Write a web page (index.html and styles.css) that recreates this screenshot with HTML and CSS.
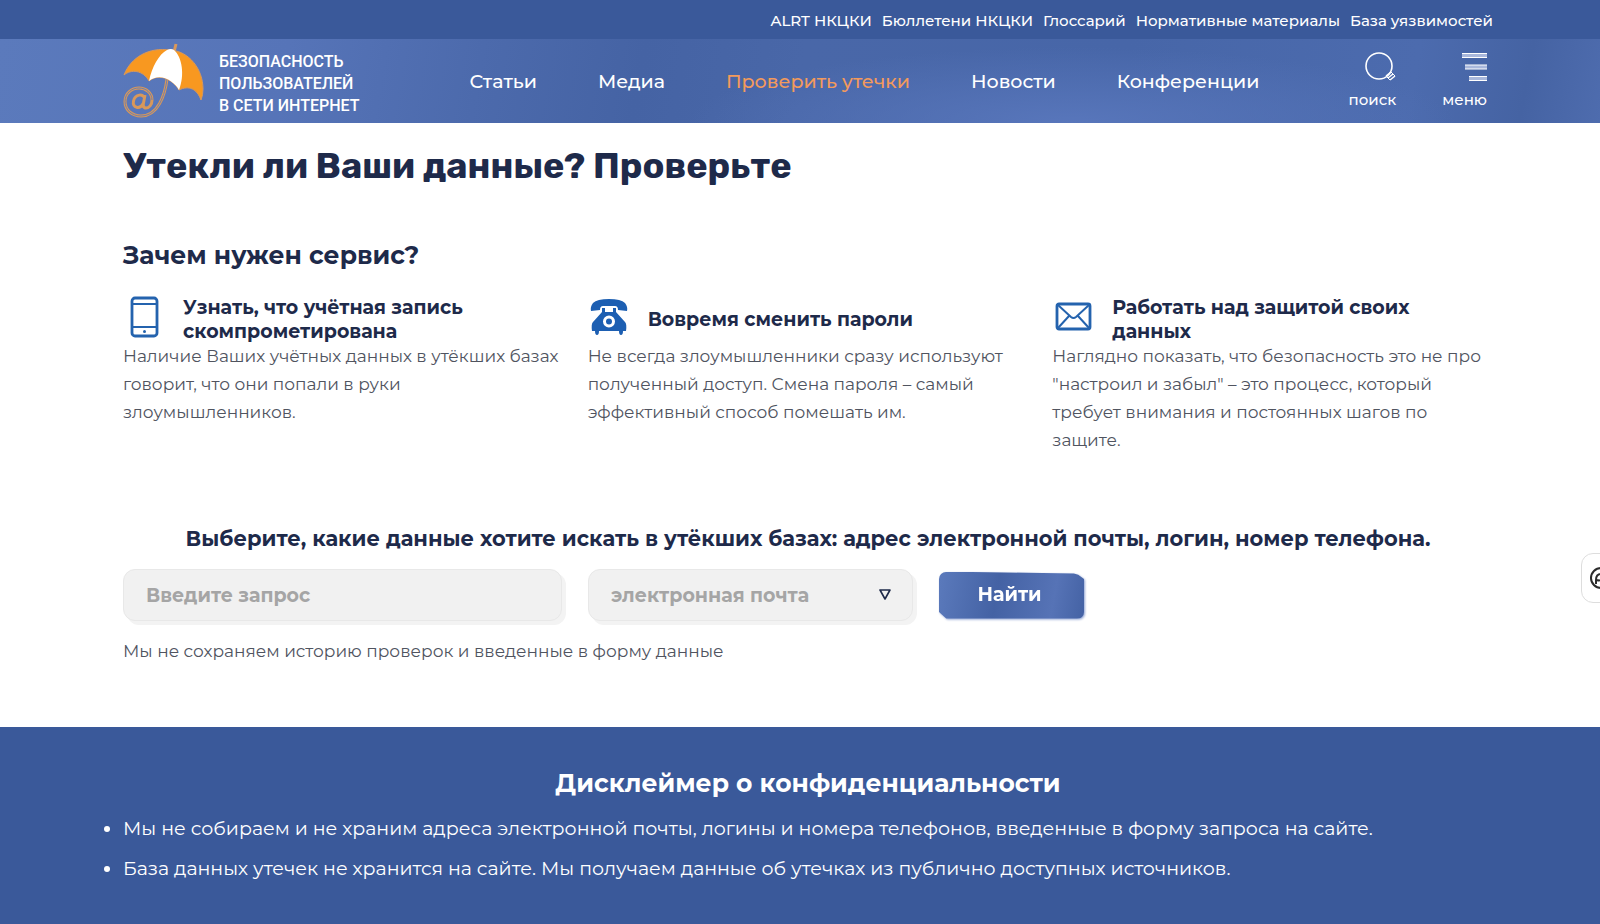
FILE: index.html
```html
<!DOCTYPE html>
<html lang="ru">
<head>
<meta charset="utf-8">
<meta name="viewport" content="width=device-width, initial-scale=1">
<title>Утекли ли Ваши данные? Проверьте</title>
<link rel="stylesheet" href="styles.css">
</head>
<body>
<nav class="topbar wrap" aria-label="Ссылки">
  <a href="#">ALRT НКЦКИ</a>
  <a href="#">Бюллетени НКЦКИ</a>
  <a href="#">Глоссарий</a>
  <a href="#">Нормативные материалы</a>
  <a href="#">База уязвимостей</a>
</nav>
<header class="header wrap">
  <a class="logo" href="#">
    <svg class="logo-mark" viewBox="0 0 82 76" aria-hidden="true">
      <path d="M51 9L53 1" fill="none" stroke="#d9985a" stroke-width="3"/>
      <path d="M44 36C42 52 35 73 18 73C9 73 2 67 2 58.500C2 50 9 45 16 45C23 45 29 50 29 57C29 62 26 65 23 65C20 65 20 62 20.500 60L22 52M21.500 56C21 50 12 51 10.500 58C9 65 17 67 20.500 60" fill="none" stroke="#d9985a" stroke-width="3" stroke-linejoin="round"/>
      <path d="M44 36C42 52 35 73 18 73C9 73 2 67 2 58.500C2 50 9 45 16 45C23 45 29 50 29 57" fill="none" stroke="#6d7fae" stroke-width="1"/>
      <path d="M1 32C8 14 26 4 47 7C66 8 80 26 80 46Q80 52 78 57C74 46 66 42 56 47C51 38 37 29 26 38C20 27 8 26 1 32Z" fill="#f89820" stroke="#d9985a" stroke-width="1"/>
      <path d="M26 38C29 24 36 11 44 7Q48 5 51 7C59 14 62 32 56 47C51 38 37 29 26 38Z" fill="#fff"/>
    </svg>
    <span class="logo-text">БЕЗОПАСНОСТЬ<br>ПОЛЬЗОВАТЕЛЕЙ<br>В СЕТИ ИНТЕРНЕТ</span>
  </a>
  <nav class="menu" aria-label="Основное меню">
    <a href="#">Статьи</a>
    <a href="#">Медиа</a>
    <a class="active" href="#">Проверить утечки</a>
    <a href="#">Новости</a>
    <a href="#">Конференции</a>
  </nav>
  <div class="tools">
    <button class="tool" type="button">
      <svg viewBox="0 0 32 30" aria-hidden="true"><circle cx="15" cy="14" r="13" fill="none" stroke="#fff" stroke-width="1.6"/><path d="M22 24L27 20M24 26L29 22M26 28L31 24" stroke="#fff" stroke-width="1.5"/><path d="M22 24L26 28M27 20L31 24" stroke="#fff" stroke-width="1"/></svg>
      поиск
    </button>
    <button class="tool" type="button">
      <svg viewBox="0 0 32 30" aria-hidden="true"><path d="M7 3.500H32M10 15H32M14 26.500H32" stroke="#a9b8dc" stroke-width="4"/><path d="M7 1.500H32M7 5.500H32M10 13H32M10 17H32M14 24.500H32M14 28.500H32" stroke="#fff" stroke-width="1"/></svg>
      меню
    </button>
  </div>
</header>
<main class="main wrap">
  <h1>Утекли ли Ваши данные? Проверьте</h1>
  <section class="why">
    <h2>Зачем нужен сервис?</h2>
    <div class="features">
      <article>
        <div class="feature-head">
          <svg viewBox="0 0 44 44" aria-hidden="true"><rect x="9" y="2" width="25" height="38" rx="3" fill="none" stroke="#2463ae" stroke-width="2.800"/><path d="M9 8H34M9 31H34" stroke="#2463ae" stroke-width="2.200"/><circle cx="21.500" cy="35.500" r="1.500" fill="#2463ae"/></svg>
          <h3>Узнать, что учётная запись скомпрометирована</h3>
        </div>
        <p>Наличие Ваших учётных данных в утёкших базах говорит, что они попали в руки злоумышленников.</p>
      </article>
      <article>
        <div class="feature-head">
          <svg viewBox="0 0 44 44" aria-hidden="true"><path d="M3 15Q2 11 5 7Q9 3 21 3Q33 3 37 7Q40 11 39 15L30 14Q30 10 27 10H15Q12 10 12 14Z" fill="#1d5fb2"/><path fill-rule="evenodd" d="M14 16V12H17V16H25V12H28V16L37 26Q39 28 38 35H35Q35 39 33 39Q31 39 31 35H11Q11 39 9 39Q7 39 7 35H4Q3 28 5 26ZM21 19.500a6 6 0 1 0 0 12a6 6 0 1 0 0-12ZM21 22.500a3 3 0 1 1 0 6a3 3 0 1 1 0-6Z" fill="#1d5fb2"/></svg>
          <h3>Вовремя сменить пароли</h3>
        </div>
        <p>Не всегда злоумышленники сразу используют полученный доступ. Смена пароля – самый эффективный способ помешать им.</p>
      </article>
      <article>
        <div class="feature-head">
          <svg viewBox="0 0 44 44" aria-hidden="true"><rect x="5" y="8" width="33" height="25" rx="2" fill="none" stroke="#2463ae" stroke-width="2.800"/><path d="M6 9L19 21Q21.500 23 24 21L37 9M6 32L17 20M37 32L26 20" fill="none" stroke="#2463ae" stroke-width="2"/></svg>
          <h3>Работать над защитой своих данных</h3>
        </div>
        <p>Наглядно показать, что безопасность это не про "настроил и забыл" – это процесс, который требует внимания и постоянных шагов по защите.</p>
      </article>
    </div>
  </section>
  <form class="search">
    <h2>Выберите, какие данные хотите искать в утёкших базах: адрес электронной почты, логин, номер телефона.</h2>
    <div class="fields">
      <input class="field" type="text" placeholder="Введите запрос" aria-label="Введите запрос">
      <div class="select">
        <select class="field" aria-label="Тип данных">
          <option>электронная почта</option>
          <option>логин</option>
          <option>номер телефона</option>
        </select>
        <svg viewBox="0 0 12 12" aria-hidden="true"><path d="M1 1H11L6 10Z" fill="none" stroke="#1e2a4a" stroke-width="1.600" stroke-linejoin="round"/></svg>
      </div>
      <button class="submit" type="submit"><span>Найти</span></button>
    </div>
    <p>Мы не сохраняем историю проверок и введенные в форму данные</p>
  </form>
</main>
<footer class="footer wrap">
  <h2>Дисклеймер о конфиденциальности</h2>
  <ul>
    <li>Мы не собираем и не храним адреса электронной почты, логины и номера телефонов, введенные в форму запроса на сайте.</li>
    <li>База данных утечек не хранится на сайте. Мы получаем данные об утечках из публично доступных источников.</li>
  </ul>
</footer>
<button class="widget" type="button" aria-label="Помощник">
  <svg viewBox="0 0 24 24" aria-hidden="true"><circle cx="12" cy="12" r="10" fill="none" stroke="#2b2b2b" stroke-width="2"/><path d="M7 18V14Q7 8 12 8H15M8 14Q12 16 13 11" fill="none" stroke="#2b2b2b" stroke-width="2"/></svg>
</button>
</body>
</html>
```
FILE: styles.css
```css
* { box-sizing: border-box; }
body {
  margin: 0;
  min-height: 100vh;
  display: flex;
  flex-direction: column;
  overflow-x: hidden;
  font-family: Montserrat, Inter, "Open Sans", sans-serif;
  color: #1e2a4a;
  background: #fff;
}
h1, h2, h3, p, ul { margin: 0; }
a { color: inherit; text-decoration: none; }
button, input, select { font: inherit; }
.wrap { padding-left: 123px; padding-right: 107px; }

.topbar {
  display: flex;
  justify-content: flex-end;
  align-items: center;
  gap: 10px;
  height: 39px;
  padding-top: 2px;
  background: #3a599a;
  color: #fff;
  font-size: 15px;
  font-weight: 500;
}
.header {
  display: flex;
  align-items: center;
  height: 84px;
  color: #fff;
  background:
    radial-gradient(ellipse 24% 90% at 67% 100%, #5876bb, transparent),
    linear-gradient(100deg, #5b7abc 0%, #5674b8 18%, #4c6aac 30%, #4563a4 40%, #4967a8 50%, #4766a8 70%, #4c6bae 88%, #4563a3 95%, #4e6cae 100%);
}
.logo { display: flex; align-items: center; gap: 14px; }
.logo-mark { width: 82px; height: 76px; }
.logo-text {
  padding-top: 6px;
  font-family: Roboto, sans-serif;
  font-size: 16px;
  font-weight: 500;
  line-height: 22px;
}
.menu { display: flex; gap: 61px; margin-left: 110px; font-size: 19px; font-weight: 500; }
.menu .active { color: #f39a5c; }
.tools { display: flex; gap: 46px; margin-left: auto; padding-right: 6px; }
.tool {
  display: flex;
  flex-direction: column;
  align-items: flex-end;
  gap: 8px;
  padding: 0 0 2px;
  border: 0;
  background: none;
  color: #fff;
  font-size: 15px;
  font-weight: 500;
}
.tool svg { width: 32px; height: 30px; }

.main { flex: 1; padding-top: 21px; }
h1 { font-family: Rubik, Montserrat, Inter, sans-serif; font-size: 36px; line-height: 44px; font-weight: 700; }
.why { padding-top: 49px; }
.why h2 { font-size: 25px; line-height: 36px; font-weight: 700; }
.features { display: grid; grid-template-columns: repeat(3, 1fr); gap: 24px; padding-top: 20px; }
.feature-head { display: flex; align-items: center; gap: 16px; height: 49px; }
.feature-head svg { width: 44px; height: 44px; flex: none; }
.feature-head h3 { padding-top: 4px; font-size: 19px; line-height: 24px; font-weight: 700; }
.features p { font-size: 17px; line-height: 28px; font-weight: 400; color: #50545f; }

.search { padding-top: 70px; }
.search h2 { font-size: 21px; line-height: 30px; font-weight: 700; text-align: center; }
.fields { display: flex; align-items: center; gap: 26px; padding-top: 15px; }
.field {
  width: 100%;
  height: 52px;
  padding: 0 22px;
  border: 1px solid #e8e8e8;
  border-radius: 12px;
  background: #f1f1f1;
  box-shadow: 4px 4px 0 #f3f3f3;
  color: #a5a5a5;
  font-size: 19px;
  font-weight: 700;
  appearance: none;
}
.field::placeholder { color: #a5a5a5; opacity: 1; }
input.field { flex: 0 1 439px; }
.select { position: relative; flex: 0 1 325px; }
.select svg { position: absolute; right: 22px; top: 20px; width: 12px; height: 12px; pointer-events: none; }
.submit {
  position: relative;
  width: 145px;
  height: 47px;
  padding: 0 4px 2px 0;
  border: 0;
  background: none;
  color: #fff;
  font-size: 19px;
  font-weight: 700;
  filter: drop-shadow(1px 1px 1px #8fa3d4);
}
.submit::before {
  content: "";
  position: absolute;
  inset: 0;
  border-radius: 7px;
  background: linear-gradient(100deg, #5b7abc 0%, #4462a4 40%, #5673b6 78%, #4462a4 100%);
  clip-path: polygon(0 0, 93% 4%, 96% 7%, 100% 16%, 100% 100%, 5% 100%, 0 86%);
}
.submit span { position: relative; }
.search p { padding-top: 17px; font-size: 17px; line-height: 27px; font-weight: 400; color: #50545f; }

.footer { min-height: 197px; padding-top: 38px; background: #3a599a; color: #fff; }
.footer h2 { font-size: 25px; line-height: 36px; font-weight: 700; text-align: center; }
.footer ul { padding: 8px 0 0; font-size: 19px; line-height: 40px; }

.widget {
  position: fixed;
  right: -30px;
  top: 553px;
  width: 49px;
  height: 50px;
  padding: 0 0 0 7px;
  border: 1px solid #ddd;
  border-radius: 12px;
  background: #fff;
  text-align: left;
}
.widget svg { display: block; width: 24px; height: 24px; }
```
